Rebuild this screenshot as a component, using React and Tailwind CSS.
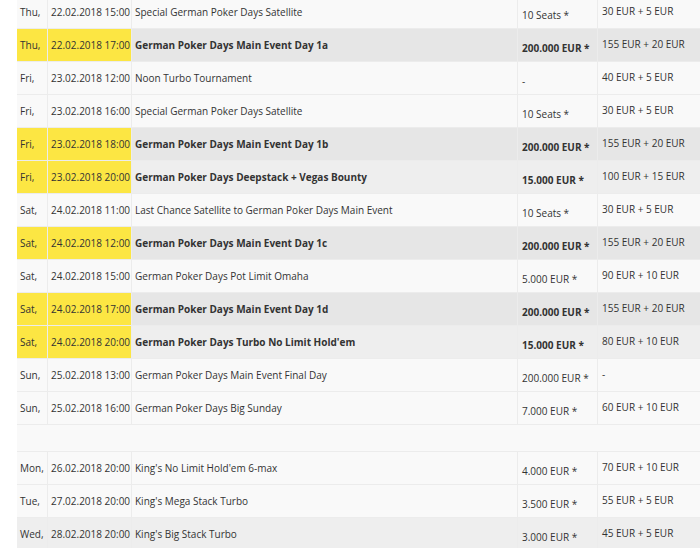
import React from 'react'

const rows = [
  ['Thu,', '22.02.2018 15:00', 'Special German Poker Days Satellite', '10 Seats *', '30 EUR + 5 EUR'],
  ['Thu,', '22.02.2018 17:00', 'German Poker Days Main Event Day 1a', '200.000 EUR *', '155 EUR + 20 EUR', 1],
  ['Fri,', '23.02.2018 12:00', 'Noon Turbo Tournament', '-', '40 EUR + 5 EUR'],
  ['Fri,', '23.02.2018 16:00', 'Special German Poker Days Satellite', '10 Seats *', '30 EUR + 5 EUR'],
  ['Fri,', '23.02.2018 18:00', 'German Poker Days Main Event Day 1b', '200.000 EUR *', '155 EUR + 20 EUR', 1],
  ['Fri,', '23.02.2018 20:00', 'German Poker Days Deepstack + Vegas Bounty', '15.000 EUR *', '100 EUR + 15 EUR', 2],
  ['Sat,', '24.02.2018 11:00', 'Last Chance Satellite to German Poker Days Main Event', '10 Seats *', '30 EUR + 5 EUR'],
  ['Sat,', '24.02.2018 12:00', 'German Poker Days Main Event Day 1c', '200.000 EUR *', '155 EUR + 20 EUR', 1],
  ['Sat,', '24.02.2018 15:00', 'German Poker Days Pot Limit Omaha', '5.000 EUR *', '90 EUR + 10 EUR'],
  ['Sat,', '24.02.2018 17:00', 'German Poker Days Main Event Day 1d', '200.000 EUR *', '155 EUR + 20 EUR', 1],
  ['Sat,', '24.02.2018 20:00', "German Poker Days Turbo No Limit Hold'em", '15.000 EUR *', '80 EUR + 10 EUR', 2],
  ['Sun,', '25.02.2018 13:00', 'German Poker Days Main Event Final Day', '200.000 EUR *', '-'],
  ['Sun,', '25.02.2018 16:00', 'German Poker Days Big Sunday', '7.000 EUR *', '60 EUR + 10 EUR'],
  null,
  ['Mon,', '26.02.2018 20:00', "King's No Limit Hold'em 6-max", '4.000 EUR *', '70 EUR + 10 EUR'],
  ['Tue,', '27.02.2018 20:00', "King's Mega Stack Turbo", '3.500 EUR *', '55 EUR + 5 EUR'],
  ['Wed,', '28.02.2018 20:00', "King's Big Stack Turbo", '3.000 EUR *', '45 EUR + 5 EUR', 3],
]

export default function App() {
  return (
    <div className="w-[700px] h-[548px] overflow-hidden bg-white pl-[17px] text-[10px] text-[#333] whitespace-nowrap" style={{ fontFamily: '"Open Sans", "Liberation Sans", sans-serif' }}>
      <div className="-mt-[4px]">
        {rows.map((r, i) => {
          if (!r) return <div key={i} className="h-[27px] bg-[#f9f9f9] border-b border-[#ececec]" />
          const hl = r[5] === 1 || r[5] === 2
          const bg = r[5] === 1 ? 'bg-[#e6e6e6]' : r[5] === 2 ? 'bg-[#eeeeee]' : r[5] === 3 ? 'bg-[#eeeeee]' : 'bg-[#f9f9f9]'
          const yel = hl ? 'bg-[#fce643]' : ''
          return (
            <div key={i} className={`flex h-[33px] border-b border-[#ececec] ${bg}`}>
              <div className={`w-[31px] pl-[3px] flex items-center border-r border-[#ececec] ${yel}`}>{r[0]}</div>
              <div className={`w-[84px] pl-[3px] flex items-center border-r border-[#ececec] ${yel}`}>{r[1]}</div>
              <div className={`w-[386px] pl-[3px] flex items-center border-r border-[#ececec] ${hl ? 'font-bold' : ''}`}>{r[2]}</div>
              <div className={`w-[80px] pl-[4px] flex items-center pt-[6px] border-r border-[#ececec] ${hl ? 'font-bold' : ''}`}>{r[3]}</div>
              <div className="flex-1 pl-[4px] pt-[8px]">{r[4]}</div>
            </div>
          )
        })}
      </div>
    </div>
  )
}
